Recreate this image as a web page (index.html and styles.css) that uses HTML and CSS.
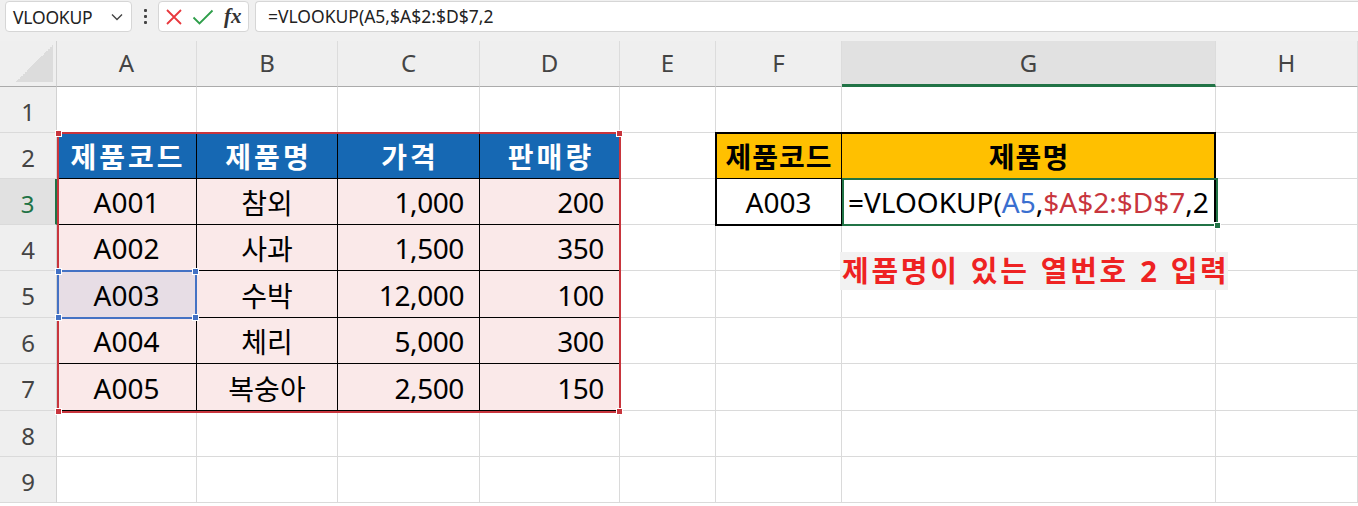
FILE: index.html
```html
<!DOCTYPE html>
<html lang="ko">
<head>
<meta charset="utf-8">
<title>VLOOKUP</title>
<link rel="stylesheet" href="styles.css">
</head>
<body>
<div class="topbar">
  <div class="namebox">
    <span class="name">VLOOKUP</span>
    <svg class="chev" width="12" height="8" viewBox="0 0 12 8"><path d="M1 1.5 L6 6.5 L11 1.5" fill="none" stroke="#444" stroke-width="1.4"/></svg>
  </div>
  <div class="dots"><span></span><span></span><span></span></div>
  <div class="fxbox">
    <svg class="ico" width="18" height="18" viewBox="0 0 18 18"><path d="M2 2 L16 16 M16 2 L2 16" stroke="#e8383d" stroke-width="1.8" fill="none"/></svg>
    <svg class="ico" width="22" height="18" viewBox="0 0 22 18"><path d="M1.5 9.5 L7.5 15.5 L20.5 2.5" stroke="#2e9e4a" stroke-width="1.8" fill="none"/></svg>
    <span class="fx">fx</span>
  </div>
  <div class="formula">=VLOOKUP(A5,$A$2:$D$7,2</div>
</div>

<div class="wrap">
<div class="sheet">
  <!-- header row -->
  <div class="corner"><div class="tri"></div></div>
  <div class="ch">A</div><div class="ch">B</div><div class="ch">C</div><div class="ch">D</div><div class="ch">E</div><div class="ch">F</div><div class="ch sel">G</div><div class="ch">H</div>

  <!-- row 1 -->
  <div class="rh">1</div>
  <div class="c"></div><div class="c"></div><div class="c"></div><div class="c"></div><div class="c"></div><div class="c"></div><div class="c"></div><div class="c"></div>

  <!-- row 2 -->
  <div class="rh">2</div>
  <div class="c th">제품코드</div><div class="c th">제품명</div><div class="c th">가격</div><div class="c th">판매량</div>
  <div class="c"></div>
  <div class="c yh">제품코드</div><div class="c yh">제품명</div>
  <div class="c"></div>

  <!-- row 3 -->
  <div class="rh rsel">3</div>
  <div class="c td ctr">A001</div><div class="c td ctr">참외</div><div class="c td num">1,000</div><div class="c td num">200</div>
  <div class="c"></div>
  <div class="c wc ctr">A003</div>
  <div class="c wc edit">=VLOOKUP(<span class="rb">A5</span>,<span class="rr">$A$2:$D$7</span>,2</div>
  <div class="c"></div>

  <!-- row 4 -->
  <div class="rh">4</div>
  <div class="c td ctr">A002</div><div class="c td ctr">사과</div><div class="c td num">1,500</div><div class="c td num">350</div>
  <div class="c"></div><div class="c"></div><div class="c"></div><div class="c"></div>

  <!-- row 5 -->
  <div class="rh">5</div>
  <div class="c td ctr a5">A003</div><div class="c td ctr">수박</div><div class="c td num">12,000</div><div class="c td num">100</div>
  <div class="c"></div><div class="c"></div><div class="c"></div><div class="c"></div>

  <!-- row 6 -->
  <div class="rh">6</div>
  <div class="c td ctr">A004</div><div class="c td ctr">체리</div><div class="c td num">5,000</div><div class="c td num">300</div>
  <div class="c"></div><div class="c"></div><div class="c"></div><div class="c"></div>

  <!-- row 7 -->
  <div class="rh">7</div>
  <div class="c td ctr">A005</div><div class="c td ctr">복숭아</div><div class="c td num">2,500</div><div class="c td num">150</div>
  <div class="c"></div><div class="c"></div><div class="c"></div><div class="c"></div>

  <!-- row 8 -->
  <div class="rh">8</div>
  <div class="c"></div><div class="c"></div><div class="c"></div><div class="c"></div><div class="c"></div><div class="c"></div><div class="c"></div><div class="c"></div>

  <!-- row 9 -->
  <div class="rh">9</div>
  <div class="c"></div><div class="c"></div><div class="c"></div><div class="c"></div><div class="c"></div><div class="c"></div><div class="c"></div><div class="c"></div>
</div>

<div class="sheet overlay">
  <div class="ov-red"><i class="h tl"></i><i class="h tr"></i><i class="h bl"></i><i class="h br"></i></div>
  <div class="ov-blue"><i class="h tl"></i><i class="h tr"></i><i class="h bl"></i><i class="h br"></i></div>
  <div class="ov-black"></div>
  <div class="ov-green"><i class="h br"></i></div>
  <div class="note">제품명이 있는 열번호 2 입력</div>
</div>
</div>
</body>
</html>
```

FILE: styles.css
```css
* { box-sizing: border-box; }
html, body { margin: 0; padding: 0; }
body {
  width: 1358px;
  height: 506px;
  overflow: hidden;
  background: #fff;
  font-family: "Noto Sans", "Noto Sans CJK KR", sans-serif;
}

/* ---------- formula bar ---------- */
.topbar {
  height: 41px;
  background: #f0f0f0;
  display: flex;
  align-items: flex-start;
  padding: 1px 0 0 5px;
}
.namebox {
  width: 127px;
  height: 31px;
  background: #fff;
  border: 1px solid #d6d6d6;
  border-radius: 4px;
  display: flex;
  align-items: center;
  justify-content: space-between;
  padding: 0 8px 0 7px;
}
.name { font-size: 17.5px; color: #222; letter-spacing: -0.2px; }
.chev { display: block; }
.dots {
  width: 26px;
  height: 31px;
  display: flex;
  flex-direction: column;
  align-items: center;
  justify-content: center;
  gap: 3px;
}
.dots span { width: 3px; height: 3px; background: #444; border-radius: 1px; }
.fxbox {
  width: 91px;
  height: 31px;
  background: #fff;
  border: 1px solid #d6d6d6;
  border-radius: 4px;
  display: flex;
  align-items: center;
  padding: 0 0 0 6px;
  gap: 9px;
}
.ico { display: block; }
.fx {
  font-family: "Liberation Serif", "DejaVu Serif", serif;
  font-style: italic;
  font-weight: bold;
  font-size: 21px;
  color: #333;
  margin-left: 1px;
}
.formula {
  flex: 1;
  height: 31px;
  margin-left: 6px;
  background: #fff;
  border: 1px solid #d6d6d6;
  border-right: none;
  border-radius: 4px 0 0 4px;
  padding-left: 12px;
  font-size: 17.5px;
  line-height: 29px;
  color: #222;
}

/* ---------- sheet ---------- */
.wrap { position: relative; }
.sheet {
  display: grid;
  grid-template-columns: 57px 140px 141px 142px 140px 96px 126px 374px 142px;
  grid-template-rows: 46px 46px 46px 46px 46px 47px 46px 47px 46px 46px;
}
.overlay {
  position: absolute;
  left: 0;
  top: 0;
  pointer-events: none;
}
.corner, .ch, .rh, .c {
  border-right: 1px solid #dadada;
  border-bottom: 1px solid #dadada;
}
.corner {
  background: #efefef;
  border-bottom: 1px solid #ababab;
  border-right: 1px solid #d2d2d2;
  position: relative;
}
.tri {
  position: absolute;
  right: 3px;
  bottom: 4px;
  width: 37px;
  height: 37px;
  background: linear-gradient(to bottom right, transparent 50%, #dcdcdc 50%);
}
.ch {
  background: #efefef;
  border-bottom: 1px solid #ababab;
  border-right: 1px solid #dcdcdc;
  display: flex;
  align-items: center;
  justify-content: center;
  font-size: 24px;
  color: #444;
  padding-bottom: 2px;
}
.ch.sel {
  background: #e1e1e1;
  border-bottom: 3px solid #217346;
  padding-bottom: 0;
}
.rh {
  background: #efefef;
  border-right: 1px solid #d2d2d2;
  border-bottom: 1px solid #dadada;
  display: flex;
  align-items: center;
  justify-content: center;
  font-size: 24px;
  color: #444;
  padding-top: 3px;
}
.rh.rsel {
  background: #e1e1e1;
  color: #217346;
  border-right: 2px solid #217346;
}
.c {
  background: #fff;
  display: flex;
  align-items: center;
  font-size: 28px;
  color: #000;
  white-space: nowrap;
  padding-top: 1px;
}
.ctr { justify-content: center; }
.num { justify-content: flex-end; padding-right: 15px; letter-spacing: -0.4px; }
.th {
  background: #1668b3;
  color: #fff;
  font-weight: bold;
  justify-content: center;
  letter-spacing: 3px;
  padding-left: 3px;
  border-right: 1px solid #000;
  border-bottom: 1px solid #000;
}
.td {
  background: #fae9e9;
  border-right: 1px solid #000;
  border-bottom: 1px solid #000;
}
.td.a5 { background: #e7dde5; }
.yh {
  background: #ffc000;
  color: #000;
  font-weight: bold;
  justify-content: center;
  letter-spacing: 1px;
  padding-left: 1px;
  border-right: 1px solid #000;
  border-bottom: 1px solid #000;
}
.wc { border-right: 1px solid #000; border-bottom: 1px solid #000; }
.edit { padding-left: 6px; }
.rb { color: #3a6fd0; }
.rr { color: #c8353d; }

/* overlays */
.ov-red {
  grid-row: 3 / 9;
  grid-column: 2 / 6;
  margin: -1px -1px -2px 0;
  border: 2px solid #c8353d;
  position: relative;
}
.ov-blue {
  grid-row: 6;
  grid-column: 2;
  margin: -1px 0 -1px 0;
  border: 2px solid #4472c4;
  position: relative;
}
.ov-black {
  grid-row: 3 / 5;
  grid-column: 7 / 9;
  margin: -1px 0 -1px -1px;
  border: 2px solid #000;
}
.ov-green {
  grid-row: 4;
  grid-column: 8;
  margin: -1px -2px -1px 0;
  border: 2px solid #217346;
  position: relative;
}
.h {
  position: absolute;
  width: 7px;
  height: 7px;
  border: 1px solid #fff;
}
.ov-red .h { background: #c8353d; }
.ov-blue .h { background: #4472c4; }
.ov-green .h { background: #217346; }
.h.tl { left: -4px; top: -4px; }
.h.tr { right: -4px; top: -4px; }
.h.bl { left: -4px; bottom: -4px; }
.h.br { right: -4px; bottom: -4px; }
.ov-green .h.br { right: -5px; bottom: -5px; }

.note {
  grid-row: 5 / 7;
  grid-column: 8 / 10;
  align-self: start;
  justify-self: start;
  margin: 27px 0 0 -2px;
  width: 388px;
  height: 38px;
  background: #f2f2f2;
  color: #ee2222;
  font-weight: bold;
  font-size: 29px;
  line-height: 38px;
  padding-left: 2px;
  letter-spacing: 2.7px;
  word-spacing: 1px;
  white-space: nowrap;
  overflow: visible;
}
```
